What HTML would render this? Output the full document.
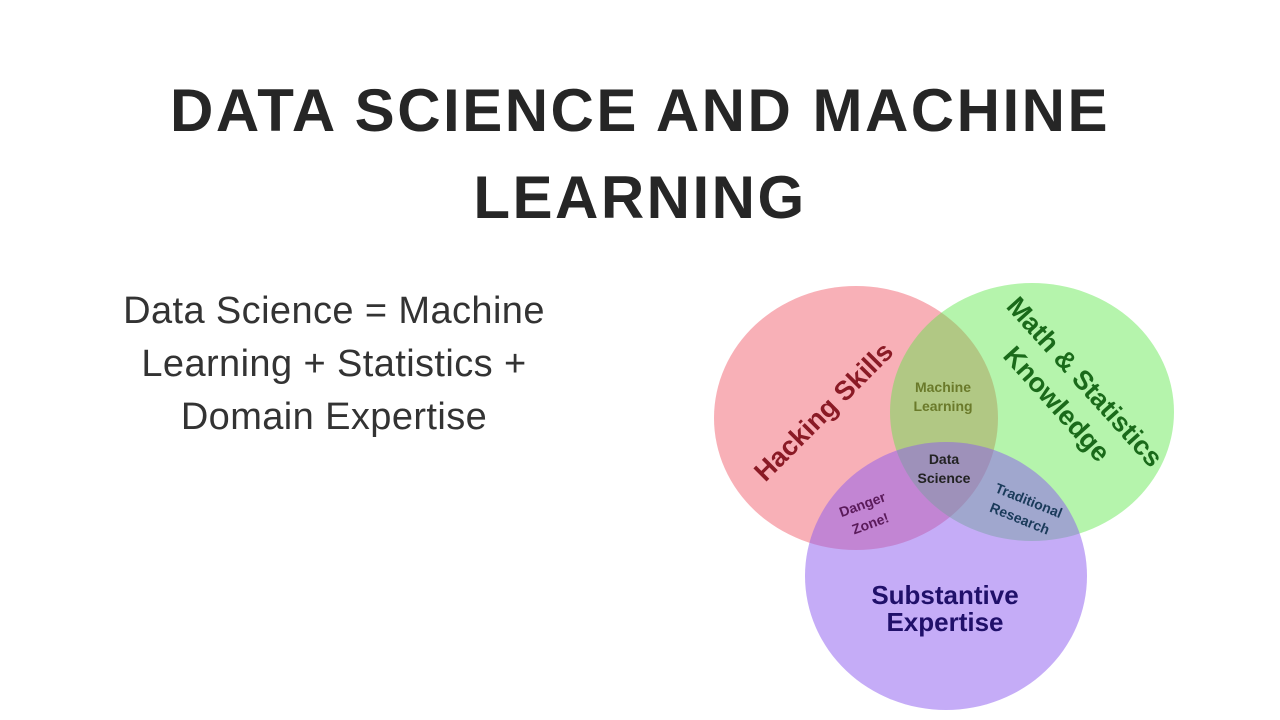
<!DOCTYPE html>
<html><head><style>
body{margin:0;width:1280px;height:720px;background:#fff;overflow:hidden;font-family:"Liberation Sans",sans-serif;}
.t{position:absolute;left:0;width:1280px;text-align:center;font-weight:bold;font-size:60px;line-height:60px;letter-spacing:2.5px;color:#262626;}
.b{position:absolute;left:34px;width:600px;text-align:center;font-size:38px;letter-spacing:0.4px;color:#333;line-height:53px;top:285px;}
</style></head><body>
<div class="t" style="top:81px">DATA SCIENCE AND MACHINE</div>
<div class="t" style="top:168px">LEARNING</div>
<div class="b">Data Science = Machine<br>Learning + Statistics +<br>Domain Expertise</div>
<svg style="position:absolute;left:0;top:0" width="1280" height="720" font-family="Liberation Sans, sans-serif" font-weight="bold">
<ellipse cx="856" cy="418" rx="142" ry="132" fill="rgba(240,80,95,0.45)"/>
<ellipse cx="1032" cy="412" rx="142" ry="129" fill="rgba(90,230,70,0.45)"/>
<ellipse cx="946" cy="576" rx="141" ry="134" fill="rgba(140,90,240,0.5)"/>
<text font-size="27" fill="#8a1a25" transform="translate(830,418) rotate(-45)" text-anchor="middle">Hacking Skills</text>
<text font-size="27" fill="#1a6a1a" transform="translate(1078,388) rotate(48)" text-anchor="middle">Math &amp; Statistics</text>
<text font-size="27" fill="#1a6a1a" transform="translate(1050,410) rotate(48)" text-anchor="middle">Knowledge</text>
<text x="943" y="392" font-size="14" fill="#6a7a2a" text-anchor="middle">Machine</text>
<text x="943" y="411" font-size="14" fill="#6a7a2a" text-anchor="middle">Learning</text>
<text x="944" y="464" font-size="14" fill="#222" text-anchor="middle">Data</text>
<text x="944" y="483" font-size="14" fill="#222" text-anchor="middle">Science</text>
<text font-size="14" fill="#5a1a5a" transform="translate(864,509) rotate(-20)" text-anchor="middle">Danger</text>
<text font-size="14" fill="#5a1a5a" transform="translate(872,528) rotate(-20)" text-anchor="middle">Zone!</text>
<text font-size="14" fill="#1a3a5a" transform="translate(1027,505) rotate(22)" text-anchor="middle">Traditional</text>
<text font-size="14" fill="#1a3a5a" transform="translate(1018,523) rotate(22)" text-anchor="middle">Research</text>
<text x="945" y="604" font-size="26" fill="#20106a" text-anchor="middle">Substantive</text>
<text x="945" y="631" font-size="26" fill="#20106a" text-anchor="middle">Expertise</text>
</svg>
</body></html>
